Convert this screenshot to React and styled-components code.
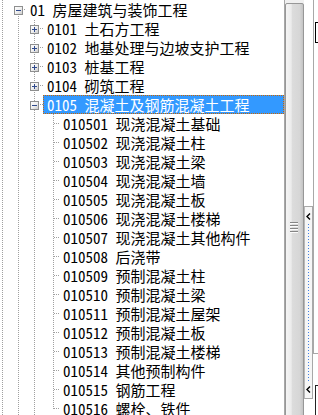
import React, { useId } from 'react';
import styled, { createGlobalStyle, css } from 'styled-components';

const Global = createGlobalStyle`
  html, body { margin: 0; padding: 0; background: #fff; }
  body { font-family: "Noto Sans CJK SC", "Noto Sans", sans-serif; }
`;

const dotV = css`
  background-image: repeating-linear-gradient(to bottom, #a0a0a0 0 1px, transparent 1px 2px);
  background-attachment: fixed;
`;
const dotH = css`
  background-image: repeating-linear-gradient(to right, #a0a0a0 0 1px, transparent 1px 2px);
  background-attachment: fixed;
`;

const Frame = styled.div`
  display: flex;
  width: 318px;
  height: 415px;
  overflow: hidden;
  background: #fff;
`;

const TreeView = styled.div`
  width: 284px;
  flex: none;
  display: flex;
  flex-direction: column;
  overflow: hidden;
`;

const Row = styled.div`
  display: flex;
  height: 19px;
  flex: none;
`;

const Guide = styled.div`
  position: relative;
  flex: none;
  width: ${(p) => p.$w}px;
  height: 19px;
  display: flex;
  align-items: center;
  &::before {
    content: '';
    position: absolute;
    left: ${(p) => p.$at}px;
    width: 1px;
    top: ${(p) => (p.$line === 'bottom' ? '9px' : '0')};
    bottom: ${(p) => (p.$line === 'top' ? '9px' : '0')};
    display: ${(p) => (p.$line ? 'block' : 'none')};
    ${dotV}
  }
  &::after {
    content: '';
    position: absolute;
    left: ${(p) => p.$at + 1}px;
    right: 0;
    top: 9px;
    height: 1px;
    display: ${(p) => (p.$tick ? 'block' : 'none')};
    ${dotH}
  }
`;

const BoxSlot = styled.span`
  position: relative;
  z-index: 1;
  display: block;
  width: 9px;
  height: 9px;
  margin-left: ${(p) => p.$at - 4}px;
  margin-top: 1px;
  background: #fff;
`;

const Label = styled.div`
  flex: 1;
  min-width: 0;
  height: 19px;
  box-sizing: border-box;
  padding-left: 4px;
  font-family: "Noto Sans CJK SC", "Noto Sans", sans-serif;
  font-size: 15px;
  line-height: 19px;
  font-feature-settings: "hwid";
  white-space: nowrap;
  overflow: hidden;
  color: #000;
  ${(p) =>
    p.$selected &&
    css`
      background: #3399ff;
      color: #fff;
      border: 1px dotted #cc6600;
      padding-left: 3px;
      line-height: 17px;
    `}
`;

const VScroll = styled.div`
  width: 20px;
  flex: none;
  box-sizing: border-box;
  border-left: 1px solid #a8a8a8;
  background: #f0f0f0;
  padding-top: 3px;
  display: flex;
  flex-direction: column;
`;

const Thumb = styled.div`
  height: 448px;
  flex: none;
  box-sizing: border-box;
  border: 1px solid #979797;
  border-radius: 2px;
  background: linear-gradient(
    to right,
    #f4f4f4 0%,
    #ececec 30%,
    #dcdcdc 38%,
    #d6d6d6 80%,
    #c4c4c4 100%
  );
  display: flex;
  align-items: center;
  justify-content: center;
`;

const Grip = styled.div`
  display: flex;
  flex-direction: column;
  gap: 1px;
  margin-left: -1px;
`;

const GripLine = styled.span`
  display: block;
  width: 8px;
  height: 1px;
  background: #858585;
  border-bottom: 1px solid #fbfbfb;
`;

const Splitter = styled.div`
  width: 9px;
  flex: none;
  box-sizing: border-box;
  padding-top: 206px;
  display: flex;
  flex-direction: column;
  background: #fff;
`;

const SplitHandle = styled.div`
  height: 193px;
  flex: none;
  box-sizing: border-box;
  border: 1px solid #a8a8a8;
  border-left-color: #b8b8b8;
  background: #f6f6f6;
  display: flex;
  flex-direction: column;
  align-items: center;
  padding: 6px 0 5px;
`;

const Rail = styled.span`
  flex: 1;
  width: 1px;
  margin: 4px 0;
  background-image: repeating-linear-gradient(to bottom, #3f7fe6 0 1px, transparent 1px 3px);
`;

const RightPanel = styled.div`
  flex: 1;
  display: flex;
  flex-direction: column;
`;

const Upper = styled.div`
  height: 354px;
  flex: none;
  box-sizing: border-box;
  border-left: 1px solid #a8a8a8;
  border-bottom: 1px solid #a8a8a8;
  padding-top: 22px;
`;

const InputEdge = styled.div`
  height: 21px;
  margin-left: 1px;
  box-sizing: border-box;
  border: 1px solid #000;
  border-right: none;
`;

const Lower = styled.div`
  flex: 1;
  padding: 31px 0 0 2px;
  display: flex;
  flex-direction: column;
`;

const LowerEdge = styled.div`
  flex: 1;
  border-top: 1px solid #222;
  border-left: 1px solid #222;
`;

function Expander({ open }) {
  const id = useId().replace(/:/g, '');
  return (
    <svg width="9" height="9" viewBox="0 0 9 9" style={{ display: 'block' }}>
      <defs>
        <linearGradient id={id} x1="0" y1="0" x2="1" y2="1">
          <stop offset="0" stopColor="#ffffff" />
          <stop offset="0.5" stopColor="#f0f0f0" />
          <stop offset="1" stopColor="#c8c8c8" />
        </linearGradient>
      </defs>
      <rect x="0.5" y="0.5" width="8" height="8" fill={`url(#${id})`} stroke="#8e8f8f" />
      <path d="M2 4.5h5" stroke="#2f4a8c" strokeWidth="1" />
      {!open && <path d="M4.5 2v5" stroke="#2f4a8c" strokeWidth="1" />}
    </svg>
  );
}

function Chevron() {
  return (
    <svg width="5" height="7" viewBox="0 0 5 7" style={{ display: 'block', flex: 'none' }}>
      <path d="M4 0.5 L1 3.5 L4 6.5" fill="none" stroke="#000" strokeWidth="1.4" />
    </svg>
  );
}

const rows = [
  { level: 0, code: '01', name: '房屋建筑与装饰工程', open: true },
  { level: 1, code: '0101', name: '土石方工程', open: false },
  { level: 1, code: '0102', name: '地基处理与边坡支护工程', open: false },
  { level: 1, code: '0103', name: '桩基工程', open: false },
  { level: 1, code: '0104', name: '砌筑工程', open: false },
  { level: 1, code: '0105', name: '混凝土及钢筋混凝土工程', open: true, selected: true },
  { level: 2, code: '010501', name: '现浇混凝土基础' },
  { level: 2, code: '010502', name: '现浇混凝土柱' },
  { level: 2, code: '010503', name: '现浇混凝土梁' },
  { level: 2, code: '010504', name: '现浇混凝土墙' },
  { level: 2, code: '010505', name: '现浇混凝土板' },
  { level: 2, code: '010506', name: '现浇混凝土楼梯' },
  { level: 2, code: '010507', name: '现浇混凝土其他构件' },
  { level: 2, code: '010508', name: '后浇带' },
  { level: 2, code: '010509', name: '预制混凝土柱' },
  { level: 2, code: '010510', name: '预制混凝土梁' },
  { level: 2, code: '010511', name: '预制混凝土屋架' },
  { level: 2, code: '010512', name: '预制混凝土板' },
  { level: 2, code: '010513', name: '预制混凝土楼梯' },
  { level: 2, code: '010514', name: '其他预制构件' },
  { level: 2, code: '010515', name: '钢筋工程' },
  { level: 2, code: '010516', name: '螺栓、铁件', last: true },
];

function TreeRow({ r }) {
  return (
    <Row>
      <Guide $w={10} $at={2} $line="full" />
      {r.level === 0 ? (
        <Guide $w={16} $at={8} $line="bottom" $tick>
          <BoxSlot $at={8}><Expander open={r.open} /></BoxSlot>
        </Guide>
      ) : (
        <Guide $w={16} $at={8} $line="full" />
      )}
      {r.level === 1 && (
        <Guide $w={17} $at={8} $line="full" $tick>
          <BoxSlot $at={8}><Expander open={r.open} /></BoxSlot>
        </Guide>
      )}
      {r.level === 2 && <Guide $w={17} $at={8} $line="full" />}
      {r.level === 2 && <Guide $w={16} $at={10} $line={r.last ? 'top' : 'full'} $tick />}
      <Label $selected={r.selected}>
        {r.code} {r.name}
      </Label>
    </Row>
  );
}

export default function App() {
  return (
    <>
      <Global />
      <Frame>
        <TreeView>
          {rows.map((r) => (
            <TreeRow key={r.code} r={r} />
          ))}
        </TreeView>
        <VScroll>
          <Thumb>
            <Grip>
              <GripLine />
              <GripLine />
              <GripLine />
              <GripLine />
            </Grip>
          </Thumb>
        </VScroll>
        <Splitter>
          <SplitHandle>
            <Chevron />
            <Rail />
            <Chevron />
          </SplitHandle>
        </Splitter>
        <RightPanel>
          <Upper>
            <InputEdge />
          </Upper>
          <Lower>
            <LowerEdge />
          </Lower>
        </RightPanel>
      </Frame>
    </>
  );
}
